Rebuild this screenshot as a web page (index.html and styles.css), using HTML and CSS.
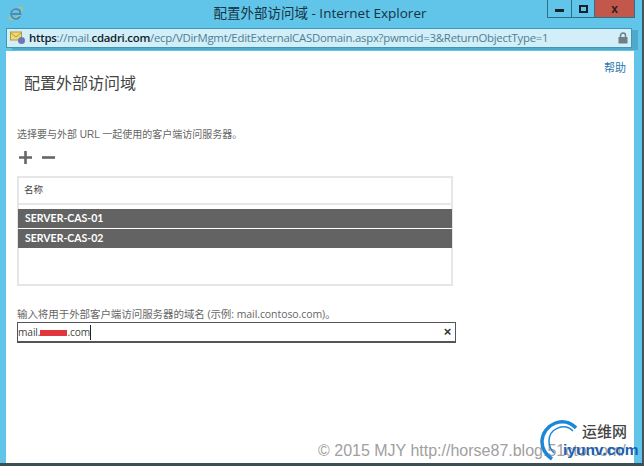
FILE: index.html
```html
<!DOCTYPE html>
<html lang="zh">
<head>
<meta charset="utf-8">
<title>配置外部访问域</title>
<link rel="stylesheet" href="styles.css">
</head>
<body>
<div class="window">
  <header class="titlebar">
    <svg class="ie-icon" width="16" height="17" viewBox="0 0 16 17">
      <ellipse cx="8" cy="8.500" rx="8" ry="3.200" transform="rotate(-42 8 8.500)" fill="none" stroke="#d8bb5c" stroke-width="1.200"/>
      <path d="M3 9h9.500c0-3-1.900-4.800-4.500-4.800S3.100 6.200 3 9c0 2.800 2.100 4.800 4.800 4.800 1.900 0 3.400-.9 4.200-2.400" fill="none" stroke="#3f8cc6" stroke-width="1.800"/>
    </svg>
    <div class="title">配置外部访问域 - Internet Explorer</div>
    <div class="controls">
      <div class="ctl ctl-min"><span class="min-glyph"></span></div>
      <div class="ctl ctl-max"><span class="max-glyph"></span></div>
      <div class="ctl ctl-close">x</div>
    </div>
  </header>
  <div class="addressbar">
    <svg class="site-icon" width="16" height="14" viewBox="0 0 16 14">
      <rect x="0.500" y="1" width="11" height="8" fill="#f0d878" stroke="#b59a3e"/>
      <path d="M1 2l5 4 5-4" fill="none" stroke="#b59a3e"/>
      <circle cx="11.500" cy="9.500" r="3.500" fill="#6a78b8"/>
    </svg>
    <div class="url"><b>https</b>://mail.<b>cdadri.com</b>/ecp/VDirMgmt/EditExternalCASDomain.aspx?pwmcid=3&amp;ReturnObjectType=1</div>
    <svg class="lock" width="10" height="12" viewBox="0 0 10 12">
      <path d="M2.500 5V3.500a2.500 2.500 0 0 1 5 0V5" fill="none" stroke="#6f7f86" stroke-width="1.500"/>
      <rect x="0.500" y="5" width="9" height="6.500" fill="#6f7f86"/>
    </svg>
  </div>
  <main class="content">
    <a class="help">帮助</a>
    <h1 class="heading">配置外部访问域</h1>
    <p class="label label-servers">选择要与外部 URL 一起使用的客户端访问服务器。</p>
    <div class="toolbar">
      <svg width="15" height="15" viewBox="0 0 15 15"><path d="M7.500 1v13M1 7.500h13" stroke="#666" stroke-width="2.600"/></svg>
      <svg width="15" height="15" viewBox="0 0 15 15"><path d="M1 7.500h13" stroke="#666" stroke-width="2.600"/></svg>
    </div>
    <div class="list">
      <div class="list-head">名称</div>
      <div class="list-row">SERVER-CAS-01</div>
      <div class="list-row">SERVER-CAS-02</div>
    </div>
    <p class="label label-domain">输入将用于外部客户端访问服务器的域名 (示例: mail.contoso.com)。</p>
    <div class="input">
      <span class="input-text">mail.<span class="redact"></span>.com</span><span class="caret"></span>
      <span class="clear">×</span>
    </div>
  </main>
  <div class="copyright">© 2015 MJY http://horse87.blog.51cto.com/</div>
  <div class="logo">
    <svg class="logo-arc" width="42" height="44" viewBox="0 0 42 44">
      <path d="M36 10C24 -3 3 6 2 23c-.300 8 4 14 10 18" fill="none" stroke="#1d87d6" stroke-width="3.500"/>
      <path d="M33 13C24 4 9 11 9 23c0 5 2 9 5 12" fill="none" stroke="#1d87d6" stroke-width="1.500"/>
    </svg>
    <span class="logo-cn">运维网</span>
    <span class="logo-en">iyunv.com</span>
  </div>
</div>
</body>
</html>
```
FILE: styles.css
```css
* { box-sizing: border-box; }
html, body { margin: 0; padding: 0; }
body { width: 644px; height: 466px; overflow: hidden; background: #fff; }
.window {
  position: relative;
  width: 644px;
  height: 466px;
  display: flex;
  flex-direction: column;
  background: #60c5e9;
  border-right: 2px solid #44555c;
  border-bottom: 3px solid #3e4e55;
  font-family: "Liberation Sans", "Noto Sans CJK SC", sans-serif;
  overflow: hidden;
}
.titlebar { height: 28px; display: flex; align-items: flex-start; position: relative; flex: none; }
.ie-icon { margin: 5px 0 0 8px; }
.title {
  position: absolute;
  left: 0;
  width: 640px;
  top: 4px;
  text-align: center;
  font: 13.500px/18px "Open Sans", "Noto Sans CJK SC", sans-serif;
  color: #17323f;
}
.controls { position: absolute; right: 7px; top: 0; display: flex; height: 18px; }
.ctl { height: 18px; border: 1px solid #2f6f88; border-top: 0; display: flex; align-items: center; justify-content: center; }
.ctl-min { width: 25px; }
.ctl-max { width: 23px; border-left: 0; }
.ctl-close { width: 40px; border-left: 0; background: #c4574c; color: #222; font: bold 12px/14px "Liberation Sans", sans-serif; }
.min-glyph { width: 9px; height: 3px; background: #12222c; margin-top: 3px; }
.max-glyph { width: 9px; height: 8px; border: 2px solid #12222c; }
.addressbar {
  height: 20px;
  margin: 0 10px 0 6px;
  background: #d2eef8;
  border: 1px solid #3f97b5;
  box-shadow: 6px 2px 0 #4fa9c9;
  display: flex;
  align-items: center;
  padding: 0 3px 0 3px;
  flex: none;
}
.site-icon { margin-right: 3px; flex: none; }
.url { flex: 1; font: 11.400px/16px "Open Sans", sans-serif; letter-spacing: -0.260px; color: #4e7f92; white-space: nowrap; overflow: hidden; }
.url b { color: #10222b; font-weight: 600; }
.lock { flex: none; }
.content {
  position: relative;
  flex: none;
  height: 412px;
  margin: 3px 8px 0 6px;
  background: #fff;
  padding: 0 0 0 11px;
  color: #555;
}
.help { position: absolute; right: 8px; top: 10px; font-size: 11px; line-height: 14px; color: #2a77b0; }
.heading { margin: 0; padding: 23px 0 0 7px; font-weight: 400; font-size: 16px; line-height: 20px; color: #444; }
.label { margin: 0; font-size: 10px; line-height: 14px; color: #666; }
.label-servers { margin-top: 34px; }
.toolbar { display: flex; gap: 8px; margin: 6px 0 0 1px; height: 18px; align-items: center; }
.list { width: 436px; height: 110px; margin-top: 10px; border: 2px solid #e6e6e6; }
.list-head { height: 27px; border-bottom: 2px solid #e6e6e6; padding-left: 5px; font-size: 9.500px; line-height: 23px; color: #444; margin-bottom: 4px; }
.list-row {
  height: 19px;
  margin-bottom: 1px;
  margin-left: -1px;
  margin-right: -1px;
  padding-left: 7px;
  background: #636363;
  color: #fff;
  font-family: Lato, sans-serif;
  font-weight: 700;
  font-size: 10.500px;
  line-height: 19px;
}
.label-domain { margin-top: 21px; font-family: "Open Sans", "Noto Sans CJK SC", sans-serif; font-size: 10.500px; letter-spacing: -0.070px; }
.input {
  width: 439px;
  height: 21px;
  margin-top: 1px;
  border: 1px solid #555;
  border-bottom-width: 2px;
  display: flex;
  align-items: center;
  padding-left: 0;
  font: 10.200px/16px "Open Sans", sans-serif;
  letter-spacing: -0.100px;
  color: #444;
}
.redact { background: #e2363e; display: inline-block; width: 27px; height: 6px; vertical-align: 0; }
.caret { width: 1px; height: 15px; background: #222; }
.clear { margin-left: auto; width: 15px; font: bold 13px/14px "Liberation Sans", sans-serif; color: #333; text-align: center; }
.copyright {
  position: absolute;
  left: 318px;
  top: 442px;
  font: 16px/18px "Liberation Sans", sans-serif;
  color: #a0a0a0;
  white-space: nowrap;
}
.logo { position: absolute; left: 538px; top: 417px; width: 102px; height: 46px; }
.logo-arc { position: absolute; left: 2px; top: 1px; }
.logo-cn { position: absolute; left: 44px; top: 6px; font-size: 15px; line-height: 18px; font-weight: 500; color: #444; }
.logo-en { position: absolute; left: 25px; top: 25px; font-weight: 700; font-size: 15.500px; line-height: 16px; color: #1c5fb0; }
```
